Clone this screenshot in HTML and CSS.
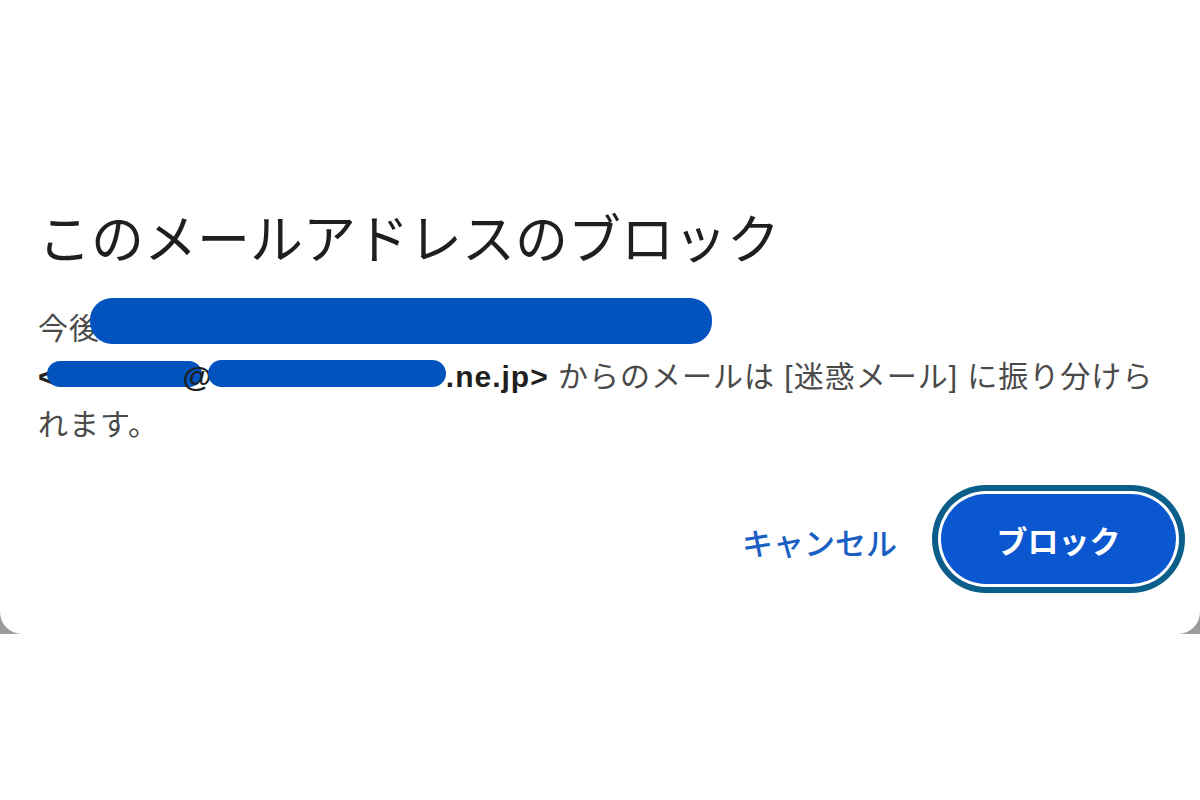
FILE: index.html
```html
<!DOCTYPE html>
<html lang="ja">
<head>
<meta charset="utf-8">
<title>このメールアドレスのブロック</title>
<link rel="stylesheet" href="styles.css">
</head>
<body>
<div class="backdrop">
  <div class="dialog">
    <h1 class="title">このメールアドレスのブロック</h1>
    <p class="body">今後<span class="blob blob-name"></span><span class="email">&lt;<span class="blob blob-user"></span>@<span class="blob blob-domain"></span>.ne.jp&gt;</span> からのメールは [迷惑メール] に振り分けられます。</p>
    <div class="actions">
      <button class="btn-text">キャンセル</button>
      <button class="btn-primary">ブロック</button>
    </div>
  </div>
</div>
</body>
</html>
```
FILE: styles.css
```css
html, body {
  margin: 0;
  background: #ffffff;
}
body {
  font-family: "Liberation Sans", "Noto Sans CJK JP", sans-serif;
}
.backdrop {
  height: 634px;
  background: linear-gradient(90deg, #9c9c9c, #c4c4c4 50%, #9c9c9c);
}
.dialog {
  box-sizing: border-box;
  height: 634px;
  background: #ffffff;
  border-radius: 0 0 22px 22px;
  padding: 200px 24px 0 38px;
}
.title {
  margin: 0;
  font-family: "Noto Sans CJK JP", sans-serif;
  font-weight: 400;
  font-size: 53px;
  line-height: 72px;
  color: #1f1f1f;
}
.body {
  margin: 26px 0 0 0;
  width: 1125px;
  font-size: 30px;
  line-height: 48px;
  letter-spacing: 1px;
  color: #4a4a4a;
}
.blob {
  display: inline-block;
  background: #0353bf;
  border-radius: 14px;
}
.blob-name {
  width: 622px;
  height: 46px;
  border-radius: 22px;
  vertical-align: -5px;
  margin-left: -10px;
}
.email {
  white-space: nowrap;
  font-weight: 700;
  color: #1f1f1f;
}
.blob-user {
  width: 155px;
  height: 26px;
  vertical-align: 0;
  margin-left: -10px;
  margin-right: -19px;
}
.blob-domain {
  width: 238px;
  height: 27px;
  vertical-align: 0;
  margin-left: -5px;
}
.actions {
  display: flex;
  justify-content: flex-end;
  align-items: center;
  gap: 44px;
  margin-top: 45px;
}
.btn-text {
  border: none;
  background: none;
  padding: 0;
  margin-top: 4px;
  font-family: "Noto Sans CJK JP", sans-serif;
  font-size: 31px;
  font-weight: 500;
  color: #1a5fc4;
}
.btn-primary {
  box-sizing: border-box;
  width: 235px;
  height: 90px;
  border: none;
  border-radius: 45px;
  background: #0b57d0;
  color: #ffffff;
  font-family: "Noto Sans CJK JP", sans-serif;
  font-size: 31px;
  font-weight: 700;
  box-shadow: 0 0 0 3px #ffffff, 0 0 0 9px #0b5e8a;
}
```
